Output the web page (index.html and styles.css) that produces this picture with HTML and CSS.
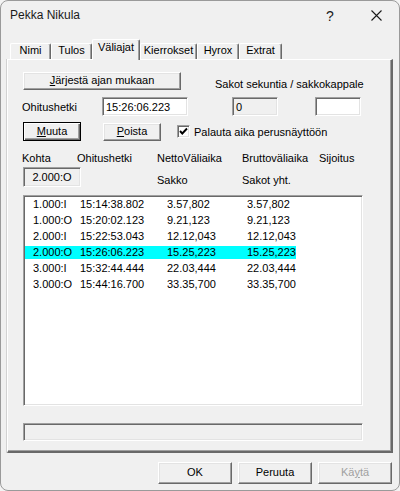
FILE: index.html
```html
<!DOCTYPE html>
<html lang="fi">
<head>
<meta charset="utf-8">
<title>Pekka Nikula</title>
<link rel="stylesheet" href="styles.css">
</head>
<body>
<div class="window">
  <div class="titlebar">
    <span class="title">Pekka Nikula</span>
    <span class="cap help">?</span>
    <span class="cap close">
      <svg width="11" height="11" viewBox="0 0 11 11"><path d="M0.5 0.5 L10.5 10.5 M10.5 0.5 L0.5 10.5" stroke="#1a1a1a" stroke-width="1.1" fill="none"/></svg>
    </span>
  </div>
  <div class="tabs">
    <div class="tab w-nimi">Nimi</div>
    <div class="tab w-tulos">Tulos</div>
    <div class="tab tab-active w-vali">Väliajat</div>
    <div class="tab w-kier">Kierrokset</div>
    <div class="tab w-hyrox">Hyrox</div>
    <div class="tab w-extrat">Extrat</div>
  </div>
  <div class="panel">
    <div class="row row1">
      <div class="btn btn-sort"><span><u>J</u>ärjestä ajan mukaan</span></div>
      <div class="label sakot-label">Sakot sekuntia / sakkokappale</div>
    </div>
    <div class="row row2">
      <div class="label ohitus-label">Ohitushetki</div>
      <div class="edit edit-time">15:26:06.223</div>
      <div class="edit edit-ro edit-small edit-zero">0</div>
      <div class="edit edit-small edit-kpl"></div>
    </div>
    <div class="row row3">
      <div class="btn btn-default btn-small"><span><u>M</u>uuta</span></div>
      <div class="btn btn-small btn-poista"><span><u>P</u>oista</span></div>
      <div class="checkbox">
        <svg width="9" height="9" viewBox="0 0 9 9"><polyline points="1,4 3.3,6.5 8,1.5" stroke="#000" stroke-width="1.9" fill="none"/></svg>
      </div>
      <div class="label check-label">Palauta aika perusnäyttöön</div>
    </div>
    <div class="hgrid hrow1">
      <div class="label">Kohta</div>
      <div class="label">Ohitushetki</div>
      <div class="label">NettoVäliaika</div>
      <div class="label">Bruttoväliaika</div>
      <div class="label">Sijoitus</div>
    </div>
    <div class="hgrid hrow2">
      <div class="edit edit-ro kohta-box">2.000:O</div>
      <div></div>
      <div class="label sub">Sakko</div>
      <div class="label sub">Sakot yht.</div>
    </div>
    <div class="list">
      <div class="lrow"><span>1.000:I</span><span>15:14:38.802</span><span>3.57,802</span><span>3.57,802</span></div>
      <div class="lrow"><span>1.000:O</span><span>15:20:02.123</span><span>9.21,123</span><span>9.21,123</span></div>
      <div class="lrow"><span>2.000:I</span><span>15:22:53.043</span><span>12.12,043</span><span>12.12,043</span></div>
      <div class="lrow lrow-sel"><span>2.000:O</span><span>15:26:06.223</span><span>15.25,223</span><span>15.25,223</span></div>
      <div class="lrow"><span>3.000:I</span><span>15:32:44.444</span><span>22.03,444</span><span>22.03,444</span></div>
      <div class="lrow"><span>3.000:O</span><span>15:44:16.700</span><span>33.35,700</span><span>33.35,700</span></div>
    </div>
    <div class="edit edit-ro status"></div>
  </div>
  <div class="footer">
    <div class="btn btn-foot"><span>OK</span></div>
    <div class="btn btn-foot"><span>Peruuta</span></div>
    <div class="btn btn-foot btn-disabled"><span>Kä<u>y</u>tä</span></div>
  </div>
</div>
</body>
</html>
```

FILE: styles.css
```css
* { box-sizing: border-box; }

html, body {
  margin: 0;
  padding: 0;
  background: #f3f3f3;
}

body {
  font-family: "Liberation Sans", Arial, sans-serif;
  font-size: 11px;
  line-height: 13px;
  color: #000;
}

.window {
  width: 400px;
  height: 491px;
  border: 1px solid #9a9a9a;
  border-radius: 8px;
  background: #f0f0f0;
  overflow: hidden;
}

/* Title bar */
.titlebar {
  height: 29px;
  display: flex;
  align-items: center;
}

.title {
  flex: 1;
  padding-left: 9px;
  font-size: 12px;
  color: #1a1a1a;
}

.cap {
  width: 46px;
  height: 29px;
  display: flex;
  align-items: center;
  justify-content: center;
}

.help {
  font-size: 14px;
  color: #1a1a1a;
  padding-top: 1px;
}

/* Tabs */
.tabs {
  height: 29px;
  display: flex;
  align-items: flex-end;
  padding-left: 9px;
}

.tab {
  height: 16px;
  background: #f0f0f0;
  border-top: 1px solid #ffffff;
  border-left: 1px solid #ffffff;
  border-right: 1px solid #696969;
  box-shadow: inset -1px 0 0 #a0a0a0;
  border-radius: 2px 2px 0 0;
  text-align: center;
  line-height: 13px;
  padding-top: 0;
  white-space: nowrap;
}

.tab-active {
  height: 21px;
  margin-bottom: -1px;
  z-index: 2;
  padding-top: 1px;
  line-height: 13px;
  align-self: flex-end;
}

.w-nimi { width: 41px; }
.w-tulos { width: 41px; }
.w-vali { width: 48px; }
.w-kier { width: 57px; }
.w-hyrox { width: 42px; }
.w-extrat { width: 43px; }

/* Panel */
.panel {
  width: 386px;
  height: 394px;
  margin-left: 6px;
  border-top: 1px solid #ffffff;
  border-left: 1px solid #ffffff;
  border-right: 2px solid #696969;
  border-bottom: 2px solid #696969;
  box-shadow: -1px 0 0 #d2d2d2, inset -1px -1px 0 #a0a0a0;
  padding: 12px 0 0 15px;
}

.row {
  display: flex;
}

.row1 {
  height: 25px;
  align-items: flex-start;
}

.row2 {
  height: 19px;
  align-items: center;
}

.row3 {
  height: 19px;
  margin-top: 6px;
  align-items: center;
}

/* Buttons */
.btn {
  display: flex;
  align-items: center;
  justify-content: center;
  background: #f0f0f0;
  border-top: 1px solid #ffffff;
  border-left: 1px solid #ffffff;
  border-right: 1px solid #696969;
  border-bottom: 1px solid #696969;
  box-shadow: inset -1px -1px 0 #a0a0a0, inset 1px 1px 0 #e3e3e3;
  white-space: nowrap;
}

.btn span {
  padding-bottom: 1px;
}

.btn-sort {
  width: 158px;
  height: 18px;
}

.btn-small {
  width: 58px;
  height: 19px;
}

.btn-default {
  border: 1px solid #000;
  box-shadow: inset 1px 1px 0 #ffffff, inset -1px -1px 0 #696969, inset -2px -2px 0 #a0a0a0;
}

.btn-poista {
  margin-left: 22px;
  height: 18px;
}

.btn-foot {
  width: 74px;
  height: 22px;
}

.btn-disabled {
  color: #a0a0a0;
}

/* Labels */
.label {
  white-space: nowrap;
}

.sakot-label {
  margin-left: 34px;
  margin-top: 6px;
}

.ohitus-label {
  width: 80px;
  margin-left: -1px;
  padding-top: 1px;
}

.check-label {
  margin-left: 4px;
  padding-top: 1px;
}

/* Edits */
.edit {
  background: #ffffff;
  border-top: 1px solid #a0a0a0;
  border-left: 1px solid #a0a0a0;
  border-right: 1px solid #ffffff;
  border-bottom: 1px solid #ffffff;
  box-shadow: inset 1px 1px 0 #696969, inset -1px -1px 0 #e3e3e3;
  white-space: nowrap;
}

.edit-ro {
  background: #f0f0f0;
}

.edit-time {
  width: 86px;
  height: 19px;
  padding: 3px 0 0 3px;
}

.edit-small {
  width: 46px;
  height: 19px;
}

.edit-zero {
  margin-left: 44px;
  padding: 3px 0 0 3px;
}

.edit-kpl {
  margin-left: 37px;
}

/* Checkbox */
.checkbox {
  width: 13px;
  height: 13px;
  margin-left: 16px;
  background: #ffffff;
  border-top: 1px solid #a0a0a0;
  border-left: 1px solid #a0a0a0;
  border-right: 1px solid #ffffff;
  border-bottom: 1px solid #ffffff;
  box-shadow: inset 1px 1px 0 #696969, inset -1px -1px 0 #e3e3e3;
  display: flex;
  align-items: center;
  justify-content: center;
}

/* Header grid */
.hgrid {
  display: grid;
  grid-template-columns: 55px 80px 85px 77px auto;
  margin-left: -1px;
}

.hrow1 {
  margin-top: 11px;
  height: 13px;
}

.hrow2 {
  margin-top: 2px;
  height: 20px;
}

.kohta-box {
  width: 58px;
  height: 20px;
  margin-left: 1px;
  text-align: center;
  padding-top: 3px;
}

.sub {
  padding-top: 7px;
}

/* List */
.list {
  width: 340px;
  height: 211px;
  margin-top: 8px;
  background: #ffffff;
  border-top: 1px solid #a0a0a0;
  border-left: 1px solid #a0a0a0;
  border-right: 1px solid #ffffff;
  border-bottom: 1px solid #ffffff;
  box-shadow: inset 1px 1px 0 #696969, inset -1px -1px 0 #e3e3e3;
  padding: 2px 0 0 1px;
  display: flex;
  flex-direction: column;
  align-items: flex-start;
  gap: 3px;
}

.lrow {
  display: grid;
  grid-template-columns: 47px 87px 80px 49px;
  padding-left: 8px;
  height: 13px;
  line-height: 13px;
  white-space: nowrap;
}

.lrow-sel {
  background: #00ffff;
}

.status {
  width: 340px;
  height: 18px;
  margin-top: 17px;
}

/* Footer */
.footer {
  display: flex;
  justify-content: flex-end;
  gap: 6px;
  padding-right: 7px;
  margin-top: 9px;
}
```
